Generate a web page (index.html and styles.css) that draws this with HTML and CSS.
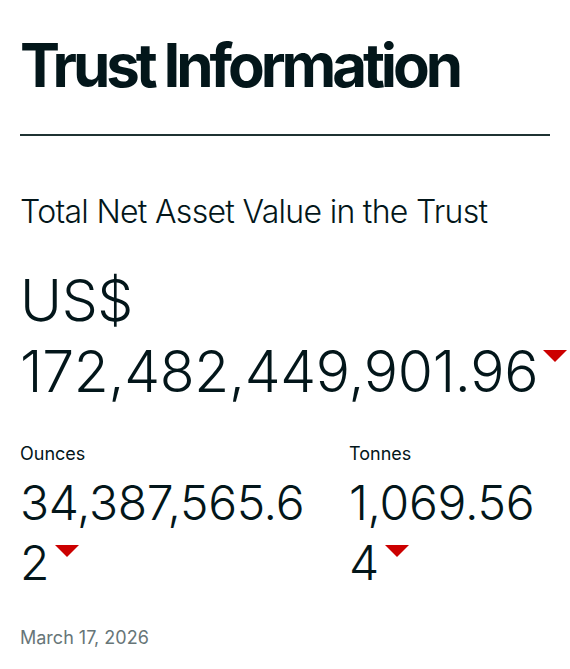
FILE: index.html
```html
<!DOCTYPE html>
<html lang="en">
<head>
<meta charset="utf-8">
<link rel="stylesheet" href="styles.css">
</head>
<body>
<main class="trust">
  <h1 class="title">Trust Information</h1>
  <hr class="rule">
  <h2 class="subtitle">Total Net Asset Value in the Trust</h2>
  <div class="nav">US$ <span class="nowrap">172,482,449,901.96<span class="down"></span></span></div>
  <div class="stats">
    <div class="stat">
      <div class="label">Ounces</div>
      <div class="value">34,387,565.62<span class="down"></span></div>
    </div>
    <div class="stat">
      <div class="label">Tonnes</div>
      <div class="value">1,069.564<span class="down"></span></div>
    </div>
  </div>
  <div class="date">March 17, 2026</div>
</main>
</body>
</html>
```
FILE: styles.css
```css
* { box-sizing: border-box; }
html, body { margin: 0; padding: 0; background: #fff; }
body {
  font-family: Inter, "Liberation Sans", sans-serif;
  color: #03161a;
}
.trust {
  padding: 29px 20px 0 20px;
}
.title {
  margin: 0;
  font-size: 60px;
  font-weight: 700;
  letter-spacing: -4.1px;
  line-height: 72px;
}
.rule {
  border: 0;
  height: 2px;
  background: #1f3333;
  margin: 33px 0 0 0;
}
.subtitle {
  margin: 56px 0 0 0;
  font-size: 32px;
  font-weight: 300;
  letter-spacing: -0.7px;
  line-height: 40px;
}
.nav {
  margin-top: 33px;
  font-size: 57px;
  font-weight: 300;
  line-height: 71px;
  letter-spacing: -0.3px;
}
.nowrap { white-space: nowrap; }
.down {
  display: inline-block;
  width: 0;
  height: 0;
  border-left: 12.5px solid transparent;
  border-right: 12.5px solid transparent;
  border-top: 12px solid #cc0000;
  vertical-align: top;
  margin-top: 14px;
  margin-left: 5px;
}
.stats {
  display: grid;
  grid-template-columns: 300px 1fr;
  column-gap: 29px;
  margin-top: 35px;
}
.label {
  font-size: 18px;
  font-weight: 400;
  line-height: 24px;
}
.value {
  margin-top: 7px;
  font-size: 48px;
  font-weight: 300;
  line-height: 60px;
  letter-spacing: -0.3px;
  overflow-wrap: anywhere;
}
.value .down { margin-top: 12px; margin-left: 6px; }
.date {
  margin-top: 33px;
  font-size: 18px;
  color: #677678;
  line-height: 24px;
}
```
